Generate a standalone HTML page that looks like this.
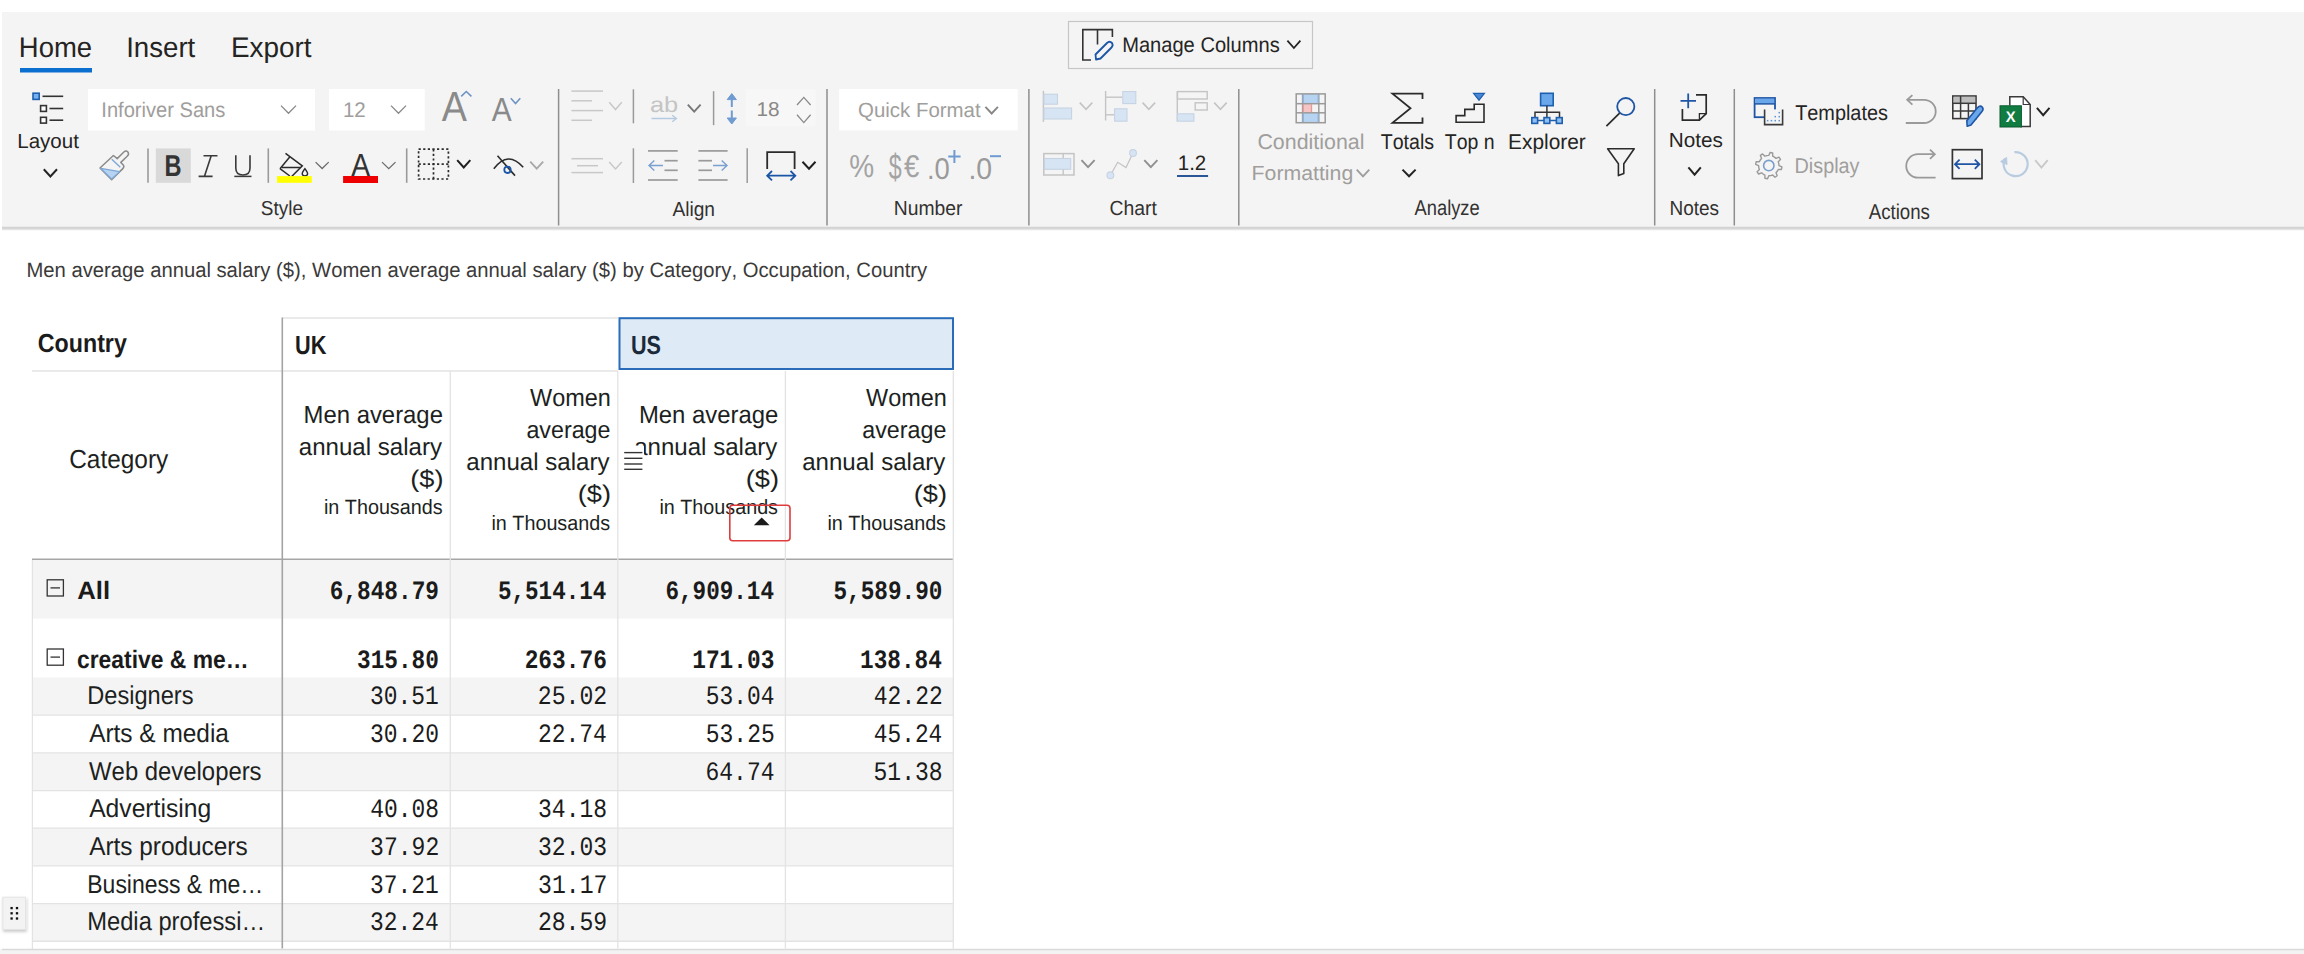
<!DOCTYPE html>
<html><head><meta charset="utf-8"><style>
html,body{margin:0;padding:0;background:#fff;width:2304px;height:954px;overflow:hidden;}
svg{display:block;}
text{font-kerning:none;}
</style></head><body>
<svg width="2304" height="954" viewBox="0 0 2304 954" text-rendering="geometricPrecision">
<rect x="0.00" y="0.00" width="2304.00" height="954.00" fill="#ffffff"/>
<rect x="2.00" y="12.00" width="2302.00" height="214.50" fill="#f4f4f4"/>
<defs><linearGradient id="sh" x1="0" y1="0" x2="0" y2="1"><stop offset="0" stop-color="#dedede"/><stop offset="0.28" stop-color="#cecece"/><stop offset="0.6" stop-color="#e4e4e4"/><stop offset="1" stop-color="#ffffff" stop-opacity="0"/></linearGradient><linearGradient id="sh2" x1="0" y1="0" x2="0" y2="1"><stop offset="0" stop-color="#d0d0d0"/><stop offset="1" stop-color="#ffffff" stop-opacity="0"/></linearGradient></defs>
<rect x="2.00" y="226.50" width="2302.00" height="5.00" fill="url(#sh)"/>
<text x="18.85" y="57.30" font-family="Liberation Sans" font-size="28.34" fill="#252423" textLength="73.27" lengthAdjust="spacingAndGlyphs">Home</text>
<text x="126.15" y="57.10" font-family="Liberation Sans" font-size="28.34" fill="#252423" textLength="69.15" lengthAdjust="spacingAndGlyphs">Insert</text>
<text x="231.01" y="57.10" font-family="Liberation Sans" font-size="28.34" fill="#252423" textLength="80.59" lengthAdjust="spacingAndGlyphs">Export</text>
<rect x="20.00" y="68.00" width="72.00" height="4.50" fill="#0a6fcf"/>
<rect x="1068.50" y="21.50" width="244.00" height="47.00" fill="none" stroke="#c6c6c6" stroke-width="1.20"/>
<path d="M1091,60 H1082.8 V29.6 H1112.4 V37" fill="none" stroke="#333" stroke-width="1.60" stroke-linejoin="miter" stroke-linecap="butt"/>
<path d="M1097.5,29.6 V44.5" fill="none" stroke="#333" stroke-width="1.60" stroke-linejoin="miter" stroke-linecap="butt"/>
<path d="M1096,59.5 L1095.5,54.5 L1107,43 Q1109.5,40.5 1112,43 Q1113.5,45.5 1111.5,47.5 L1100.5,58.5 Z" fill="none" stroke="#1b55a6" stroke-width="1.80" stroke-linejoin="round" stroke-linecap="butt"/>
<text x="1122.15" y="52.20" font-family="Liberation Sans" font-size="21.22" fill="#252423" textLength="157.58" lengthAdjust="spacingAndGlyphs">Manage Columns</text>
<path d="M1287.40,40.60 L1293.90,48.00 L1300.40,40.60" fill="none" stroke="#252423" stroke-width="1.80" stroke-linejoin="miter" stroke-linecap="butt"/>
<line x1="558.60" y1="89.00" x2="558.60" y2="225.50" stroke="#8e8e8e" stroke-width="1.50" stroke-linecap="butt"/>
<line x1="827.00" y1="89.00" x2="827.00" y2="225.50" stroke="#8e8e8e" stroke-width="1.50" stroke-linecap="butt"/>
<line x1="1028.90" y1="89.00" x2="1028.90" y2="225.50" stroke="#8e8e8e" stroke-width="1.50" stroke-linecap="butt"/>
<line x1="1238.80" y1="89.00" x2="1238.80" y2="225.50" stroke="#8e8e8e" stroke-width="1.50" stroke-linecap="butt"/>
<line x1="1654.70" y1="89.00" x2="1654.70" y2="225.50" stroke="#8e8e8e" stroke-width="1.50" stroke-linecap="butt"/>
<line x1="1734.30" y1="89.00" x2="1734.30" y2="225.50" stroke="#8e8e8e" stroke-width="1.50" stroke-linecap="butt"/>
<rect x="33.00" y="93.20" width="6.20" height="6.20" fill="#78b0ee" stroke="#1f5fb0" stroke-width="1.60"/>
<line x1="42.50" y1="96.30" x2="63.20" y2="96.30" stroke="#333" stroke-width="1.60" stroke-linecap="butt"/>
<rect x="40.60" y="105.60" width="5.80" height="5.80" fill="#fff" stroke="#333" stroke-width="1.60"/>
<line x1="49.50" y1="108.50" x2="63.20" y2="108.50" stroke="#333" stroke-width="1.60" stroke-linecap="butt"/>
<rect x="40.60" y="117.30" width="5.80" height="5.80" fill="#fff" stroke="#333" stroke-width="1.60"/>
<line x1="49.50" y1="120.20" x2="63.20" y2="120.20" stroke="#333" stroke-width="1.60" stroke-linecap="butt"/>
<text x="17.22" y="148.40" font-family="Liberation Sans" font-size="20.49" fill="#252423" textLength="61.63" lengthAdjust="spacingAndGlyphs">Layout</text>
<path d="M43.80,169.20 L50.40,176.40 L57.00,169.20" fill="none" stroke="#252423" stroke-width="2.00" stroke-linejoin="miter" stroke-linecap="butt"/>
<rect x="88.00" y="89.00" width="227.00" height="41.50" fill="#ffffff"/>
<text x="101.35" y="117.40" font-family="Liberation Sans" font-size="21.22" fill="#a09e9c" textLength="123.98" lengthAdjust="spacingAndGlyphs">Inforiver Sans</text>
<path d="M281.00,105.60 L288.50,113.20 L296.00,105.60" fill="none" stroke="#8a8886" stroke-width="1.30" stroke-linejoin="miter" stroke-linecap="butt"/>
<rect x="329.00" y="89.00" width="95.70" height="41.50" fill="#ffffff"/>
<text x="342.93" y="117.40" font-family="Liberation Sans" font-size="21.22" fill="#a09e9c" textLength="22.90" lengthAdjust="spacingAndGlyphs">12</text>
<path d="M391.00,105.60 L398.50,113.20 L406.00,105.60" fill="none" stroke="#8a8886" stroke-width="1.30" stroke-linejoin="miter" stroke-linecap="butt"/>
<text x="441.83" y="121.00" font-family="Liberation Sans" font-size="42.15" fill="#8a8a8a" textLength="25.15" lengthAdjust="spacingAndGlyphs">A</text>
<path d="M461.20,96.40 L466.30,91.50 L471.40,96.40" fill="none" stroke="#6f93c4" stroke-width="1.60" stroke-linejoin="miter" stroke-linecap="butt"/>
<text x="491.84" y="121.00" font-family="Liberation Sans" font-size="33.43" fill="#8a8a8a" textLength="19.92" lengthAdjust="spacingAndGlyphs">A</text>
<path d="M510.80,98.30 L515.55,103.60 L520.30,98.30" fill="none" stroke="#6f93c4" stroke-width="1.60" stroke-linejoin="miter" stroke-linecap="butt"/>
<path d="M100,168 L113.4,155.5 L117.2,158.6 L123.6,152.2 Q126.5,149.6 128.2,152.5 Q129.2,154.6 127.2,156.3 L120.8,162.4 L123.3,165 Q124.6,166.8 122.8,168.6 L111.6,179.6 Z" fill="none" stroke="#8a8a8a" stroke-width="1.50" stroke-linejoin="round" stroke-linecap="butt"/>
<path d="M100.8,168.4 L119.6,171.6 L111.6,179 Z" fill="#b7d3f2" stroke="#7ea7d8" stroke-width="1.20" stroke-linejoin="round" stroke-linecap="butt"/>
<line x1="111.80" y1="159.20" x2="120.30" y2="167.20" stroke="#7ea7d8" stroke-width="1.40" stroke-linecap="butt"/>
<line x1="148.00" y1="148.40" x2="148.00" y2="182.80" stroke="#9a9a9a" stroke-width="1.60" stroke-linecap="butt"/>
<rect x="155.80" y="148.40" width="35.00" height="34.40" fill="#d9d9d9"/>
<text x="164.62" y="176.00" font-family="Liberation Sans" font-size="30.23" fill="#333333" font-weight="bold" textLength="17.05" lengthAdjust="spacingAndGlyphs">B</text>
<path d="M203.5,155.8 H217.5 M198.6,176.4 H212.6 M211.2,155.8 L204.4,176.4" fill="none" stroke="#3a3a3a" stroke-width="1.60" stroke-linejoin="miter" stroke-linecap="butt"/>
<path d="M235.8,155.3 V168 Q235.8,175 243,175 Q250,175 250,168 V155.3" fill="none" stroke="#3a3a3a" stroke-width="1.60" stroke-linejoin="miter" stroke-linecap="butt"/>
<line x1="234.30" y1="176.40" x2="251.50" y2="176.40" stroke="#3a3a3a" stroke-width="1.50" stroke-linecap="butt"/>
<line x1="268.30" y1="148.40" x2="268.30" y2="182.80" stroke="#9a9a9a" stroke-width="1.60" stroke-linecap="butt"/>
<path d="M285.5,153.4 L302.3,165.9 L291.7,176.5 M280,168.7 L289.7,157 M280,168.7 L289.8,176" fill="none" stroke="#2b2b2b" stroke-width="1.50" stroke-linejoin="miter" stroke-linecap="butt"/>
<line x1="282.00" y1="167.50" x2="300.30" y2="167.50" stroke="#2b2b2b" stroke-width="1.50" stroke-linecap="butt"/>
<path d="M304.9,168.6 Q307.6,172.4 307.6,173.6 Q307.6,176 304.9,176 Q302.2,176 302.2,173.6 Q302.2,172.4 304.9,168.6 Z" fill="none" stroke="#2b2b2b" stroke-width="1.40" stroke-linejoin="miter" stroke-linecap="butt"/>
<rect x="277.00" y="176.10" width="34.80" height="6.70" fill="#ffff00"/>
<path d="M315.60,162.10 L322.15,168.50 L328.70,162.10" fill="none" stroke="#6b6b6b" stroke-width="1.30" stroke-linejoin="miter" stroke-linecap="butt"/>
<text x="351.19" y="176.00" font-family="Liberation Sans" font-size="31.83" fill="#333333" textLength="18.86" lengthAdjust="spacingAndGlyphs">A</text>
<rect x="343.10" y="176.00" width="34.90" height="7.00" fill="#ee0000"/>
<path d="M382.00,162.10 L388.75,168.60 L395.50,162.10" fill="none" stroke="#6b6b6b" stroke-width="1.30" stroke-linejoin="miter" stroke-linecap="butt"/>
<line x1="406.70" y1="148.40" x2="406.70" y2="182.80" stroke="#9a9a9a" stroke-width="1.60" stroke-linecap="butt"/>
<g stroke="#2b2b2b" stroke-width="1.7" fill="none" stroke-dasharray="2.2,2.4"><rect x="418.6" y="149.2" width="29.8" height="29.8"/><line x1="433.5" y1="149.2" x2="433.5" y2="179"/><line x1="418.6" y1="164.1" x2="448.4" y2="164.1"/></g>
<path d="M457.20,160.20 L463.75,167.40 L470.30,160.20" fill="none" stroke="#1f1f1f" stroke-width="2.00" stroke-linejoin="miter" stroke-linecap="butt"/>
<path d="M493.8,168.8 Q508,150 523.2,167.3" fill="none" stroke="#2b2b2b" stroke-width="1.60" stroke-linejoin="miter" stroke-linecap="butt"/>
<line x1="497.50" y1="155.80" x2="515.00" y2="175.60" stroke="#2b2b2b" stroke-width="1.60" stroke-linecap="butt"/>
<circle cx="507.5" cy="169.8" r="3.2" fill="none" stroke="#1b55a6" stroke-width="1.8"/>
<path d="M530.20,161.60 L536.70,168.60 L543.20,161.60" fill="none" stroke="#a8a8a8" stroke-width="1.80" stroke-linejoin="miter" stroke-linecap="butt"/>
<text x="260.84" y="214.90" font-family="Liberation Sans" font-size="20.20" fill="#323130" textLength="42.10" lengthAdjust="spacingAndGlyphs">Style</text>
<line x1="571.40" y1="91.10" x2="603.00" y2="91.10" stroke="#c8c8c8" stroke-width="1.50" stroke-linecap="butt"/>
<line x1="571.40" y1="100.80" x2="592.00" y2="100.80" stroke="#c8c8c8" stroke-width="1.50" stroke-linecap="butt"/>
<line x1="571.40" y1="110.60" x2="603.00" y2="110.60" stroke="#c8c8c8" stroke-width="1.50" stroke-linecap="butt"/>
<line x1="571.40" y1="120.30" x2="592.00" y2="120.30" stroke="#c8c8c8" stroke-width="1.50" stroke-linecap="butt"/>
<path d="M609.20,102.20 L615.50,109.60 L621.80,102.20" fill="none" stroke="#c8c8c8" stroke-width="1.50" stroke-linejoin="miter" stroke-linecap="butt"/>
<line x1="633.40" y1="89.30" x2="633.40" y2="123.30" stroke="#9a9a9a" stroke-width="1.50" stroke-linecap="butt"/>
<text x="649.92" y="111.80" font-family="Liberation Sans" font-size="21.58" fill="#c4c4c4" textLength="28.25" lengthAdjust="spacingAndGlyphs">ab</text>
<path d="M651.5,118.5 H676.5 M672.2,115.2 L676.5,118.5 L672.2,121.8" fill="none" stroke="#b5c9e0" stroke-width="1.30" stroke-linejoin="miter" stroke-linecap="butt"/>
<path d="M687.80,104.60 L694.20,111.60 L700.60,104.60" fill="none" stroke="#777777" stroke-width="1.90" stroke-linejoin="miter" stroke-linecap="butt"/>
<line x1="713.60" y1="91.20" x2="713.60" y2="125.20" stroke="#9a9a9a" stroke-width="1.50" stroke-linecap="butt"/>
<path d="M731.8,95 V107 M731.8,110.5 V122.5" fill="none" stroke="#6f9bd1" stroke-width="2.00" stroke-linejoin="miter" stroke-linecap="butt"/>
<path d="M727.2,99.6 L731.8,93.6 L736.4,99.6 Z M727.2,118 L731.8,124 L736.4,118 Z" fill="#6f9bd1" stroke="#6f9bd1" stroke-width="1.00" stroke-linejoin="miter" stroke-linecap="butt"/>
<rect x="745.80" y="89.30" width="70.00" height="37.00" fill="#f7f7f7"/>
<text x="756.42" y="116.00" font-family="Liberation Sans" font-size="20.06" fill="#8a8886" textLength="23.08" lengthAdjust="spacingAndGlyphs">18</text>
<path d="M797.00,105.00 L803.80,97.40 L810.60,105.00" fill="none" stroke="#8a8a8a" stroke-width="1.30" stroke-linejoin="miter" stroke-linecap="butt"/>
<path d="M797.00,114.80 L803.80,122.60 L810.60,114.80" fill="none" stroke="#8a8a8a" stroke-width="1.30" stroke-linejoin="miter" stroke-linecap="butt"/>
<line x1="571.40" y1="158.70" x2="603.00" y2="158.70" stroke="#c8c8c8" stroke-width="1.50" stroke-linecap="butt"/>
<line x1="577.00" y1="165.70" x2="598.00" y2="165.70" stroke="#c8c8c8" stroke-width="1.50" stroke-linecap="butt"/>
<line x1="571.40" y1="172.60" x2="603.00" y2="172.60" stroke="#c8c8c8" stroke-width="1.50" stroke-linecap="butt"/>
<path d="M609.20,162.00 L615.50,169.00 L621.80,162.00" fill="none" stroke="#c8c8c8" stroke-width="1.50" stroke-linejoin="miter" stroke-linecap="butt"/>
<line x1="633.40" y1="148.30" x2="633.40" y2="183.00" stroke="#9a9a9a" stroke-width="1.50" stroke-linecap="butt"/>
<line x1="648.00" y1="150.90" x2="677.70" y2="150.90" stroke="#9a9a9a" stroke-width="1.70" stroke-linecap="butt"/>
<line x1="664.50" y1="160.70" x2="677.70" y2="160.70" stroke="#9a9a9a" stroke-width="1.70" stroke-linecap="butt"/>
<line x1="664.50" y1="170.30" x2="677.70" y2="170.30" stroke="#9a9a9a" stroke-width="1.70" stroke-linecap="butt"/>
<line x1="648.00" y1="180.00" x2="677.70" y2="180.00" stroke="#9a9a9a" stroke-width="1.70" stroke-linecap="butt"/>
<path d="M663,165.5 H649 M654.3,160.5 L649,165.5 L654.3,170.5" fill="none" stroke="#7aa0d0" stroke-width="1.40" stroke-linejoin="miter" stroke-linecap="butt"/>
<line x1="698.40" y1="150.90" x2="727.60" y2="150.90" stroke="#9a9a9a" stroke-width="1.70" stroke-linecap="butt"/>
<line x1="698.40" y1="160.70" x2="712.00" y2="160.70" stroke="#9a9a9a" stroke-width="1.70" stroke-linecap="butt"/>
<line x1="698.40" y1="170.30" x2="712.00" y2="170.30" stroke="#9a9a9a" stroke-width="1.70" stroke-linecap="butt"/>
<line x1="698.40" y1="180.00" x2="727.60" y2="180.00" stroke="#9a9a9a" stroke-width="1.70" stroke-linecap="butt"/>
<path d="M713,165.5 H727 M721.7,160.5 L727,165.5 L721.7,170.5" fill="none" stroke="#7aa0d0" stroke-width="1.40" stroke-linejoin="miter" stroke-linecap="butt"/>
<line x1="747.20" y1="148.30" x2="747.20" y2="183.00" stroke="#9a9a9a" stroke-width="1.50" stroke-linecap="butt"/>
<path d="M767.2,169 V152.2 H794.6 V169" fill="none" stroke="#2b2b2b" stroke-width="1.80" stroke-linejoin="miter" stroke-linecap="butt"/>
<path d="M767.5,175.7 H795 M772,171 L767.2,175.7 L772,180.4 M790.5,171 L795.3,175.7 L790.5,180.4" fill="none" stroke="#1b55a6" stroke-width="1.80" stroke-linejoin="miter" stroke-linecap="butt"/>
<path d="M802.50,161.80 L809.00,168.80 L815.50,161.80" fill="none" stroke="#1f1f1f" stroke-width="2.00" stroke-linejoin="miter" stroke-linecap="butt"/>
<text x="672.46" y="215.50" font-family="Liberation Sans" font-size="20.35" fill="#323130" textLength="42.58" lengthAdjust="spacingAndGlyphs">Align</text>
<rect x="839.10" y="89.00" width="178.60" height="41.40" fill="#ffffff"/>
<text x="858.03" y="117.20" font-family="Liberation Sans" font-size="20.49" fill="#a09e9c" textLength="122.62" lengthAdjust="spacingAndGlyphs">Quick Format</text>
<path d="M985.40,106.80 L991.65,113.50 L997.90,106.80" fill="none" stroke="#8a8886" stroke-width="1.90" stroke-linejoin="miter" stroke-linecap="butt"/>
<text x="849.20" y="176.50" font-family="Liberation Sans" font-size="31.86" fill="#a3a3a3" textLength="24.90" lengthAdjust="spacingAndGlyphs">%</text>
<text x="888.75" y="179.00" font-family="Liberation Sans" font-size="35.71" fill="#a3a3a3" textLength="12.92" lengthAdjust="spacingAndGlyphs">$</text>
<text x="903.99" y="176.50" font-family="Liberation Sans" font-size="31.43" fill="#a3a3a3" textLength="15.30" lengthAdjust="spacingAndGlyphs">€</text>
<text x="927.00" y="178.50" font-family="Liberation Sans" font-size="30.00" fill="#9a9a9a" textLength="22.88" lengthAdjust="spacingAndGlyphs">.0</text>
<path d="M948.2,156.5 H960.6 M954.4,150 V163" fill="none" stroke="#6f9bd1" stroke-width="2.00" stroke-linejoin="miter" stroke-linecap="butt"/>
<text x="968.40" y="178.50" font-family="Liberation Sans" font-size="30.00" fill="#9a9a9a" textLength="23.71" lengthAdjust="spacingAndGlyphs">.0</text>
<line x1="990.00" y1="156.20" x2="1001.00" y2="156.20" stroke="#6f9bd1" stroke-width="2.00" stroke-linecap="butt"/>
<text x="893.82" y="215.00" font-family="Liberation Sans" font-size="20.35" fill="#323130" textLength="68.71" lengthAdjust="spacingAndGlyphs">Number</text>
<line x1="1043.40" y1="90.80" x2="1043.40" y2="121.90" stroke="#c4c4c4" stroke-width="1.40" stroke-linecap="butt"/>
<rect x="1044.00" y="94.20" width="13.50" height="10.00" fill="#d6e4f4" stroke="#c7d3e2" stroke-width="1.10"/>
<rect x="1044.00" y="108.00" width="27.60" height="11.00" fill="#d6e4f4" stroke="#c7d3e2" stroke-width="1.10"/>
<path d="M1079.80,102.60 L1086.05,109.40 L1092.30,102.60" fill="none" stroke="#c4c4c4" stroke-width="1.60" stroke-linejoin="miter" stroke-linecap="butt"/>
<line x1="1105.60" y1="91.00" x2="1105.60" y2="120.50" stroke="#c4c4c4" stroke-width="1.40" stroke-linecap="butt"/>
<line x1="1105.60" y1="97.20" x2="1122.50" y2="97.20" stroke="#c4c4c4" stroke-width="1.40" stroke-linecap="butt"/>
<line x1="1105.60" y1="114.80" x2="1114.20" y2="114.80" stroke="#c4c4c4" stroke-width="1.40" stroke-linecap="butt"/>
<rect x="1122.80" y="91.60" width="13.00" height="12.00" fill="#d6e4f4" stroke="#c7d3e2" stroke-width="1.10"/>
<rect x="1114.60" y="108.80" width="12.40" height="12.40" fill="#d6e4f4" stroke="#c7d3e2" stroke-width="1.10"/>
<path d="M1142.60,102.60 L1148.85,109.40 L1155.10,102.60" fill="none" stroke="#c4c4c4" stroke-width="1.60" stroke-linejoin="miter" stroke-linecap="butt"/>
<line x1="1177.30" y1="91.20" x2="1177.30" y2="121.50" stroke="#c4c4c4" stroke-width="1.40" stroke-linecap="butt"/>
<rect x="1177.50" y="91.60" width="29.70" height="7.40" fill="none" stroke="#c4c4c4" stroke-width="1.40"/>
<rect x="1195.20" y="102.80" width="12.00" height="7.20" fill="none" stroke="#c4c4c4" stroke-width="1.40"/>
<rect x="1177.50" y="113.80" width="16.40" height="7.40" fill="#d6e4f4" stroke="#c7d3e2" stroke-width="1.10"/>
<path d="M1214.20,102.60 L1220.45,109.40 L1226.70,102.60" fill="none" stroke="#c4c4c4" stroke-width="1.60" stroke-linejoin="miter" stroke-linecap="butt"/>
<rect x="1043.80" y="153.60" width="30.20" height="21.40" fill="none" stroke="#c4c4c4" stroke-width="1.50"/>
<line x1="1063.20" y1="153.60" x2="1063.20" y2="175.00" stroke="#c4c4c4" stroke-width="1.40" stroke-linecap="butt"/>
<rect x="1044.50" y="158.50" width="26.20" height="10.80" fill="#d6e4f4" stroke="#c7d3e2" stroke-width="1.10"/>
<path d="M1081.50,160.20 L1088.05,167.20 L1094.60,160.20" fill="none" stroke="#8f8f8f" stroke-width="1.90" stroke-linejoin="miter" stroke-linecap="butt"/>
<path d="M1110.4,175.3 L1117.7,162.3 L1126,167.6 L1133,153" fill="none" stroke="#c4c4c4" stroke-width="1.30" stroke-linejoin="miter" stroke-linecap="butt"/>
<circle cx="1110.4" cy="175.3" r="3.4" fill="#d6e4f4" stroke="#c7d3e2" stroke-width="1.1"/>
<circle cx="1133" cy="153" r="3.4" fill="#d6e4f4" stroke="#c7d3e2" stroke-width="1.1"/>
<path d="M1144.30,160.20 L1150.85,167.20 L1157.40,160.20" fill="none" stroke="#8f8f8f" stroke-width="1.90" stroke-linejoin="miter" stroke-linecap="butt"/>
<text x="1177.74" y="170.00" font-family="Liberation Sans" font-size="20.92" fill="#252423" textLength="28.49" lengthAdjust="spacingAndGlyphs">1.2</text>
<rect x="1177.00" y="175.00" width="31.10" height="2.00" fill="#2b5797"/>
<text x="1109.52" y="214.90" font-family="Liberation Sans" font-size="20.35" fill="#323130" textLength="47.43" lengthAdjust="spacingAndGlyphs">Chart</text>
<rect x="1302.60" y="93.60" width="16.20" height="10.10" fill="#b6d3f2"/>
<rect x="1302.60" y="112.80" width="16.20" height="10.10" fill="#b6d3f2"/>
<rect x="1302.60" y="103.70" width="9.40" height="9.10" fill="#f5c4c4"/>
<g stroke="#9a9a9a" stroke-width="1.5" fill="none"><rect x="1296.2" y="93.9" width="29" height="28.8"/><line x1="1302.6" y1="93.9" x2="1302.6" y2="122.7"/><line x1="1318.8" y1="93.9" x2="1318.8" y2="122.7"/><line x1="1296.2" y1="103.7" x2="1325.2" y2="103.7"/><line x1="1296.2" y1="112.8" x2="1325.2" y2="112.8"/></g>
<g stroke="#8fb4de" stroke-width="1.3" fill="none"><line x1="1303.2" y1="94.5" x2="1303.2" y2="103"/><line x1="1318.2" y1="94.5" x2="1318.2" y2="103"/><line x1="1303.2" y1="113.4" x2="1303.2" y2="122"/><line x1="1318.2" y1="113.4" x2="1318.2" y2="122"/></g>
<line x1="1303.20" y1="104.20" x2="1303.20" y2="112.30" stroke="#e59a9a" stroke-width="1.30" stroke-linecap="butt"/>
<line x1="1311.50" y1="104.20" x2="1311.50" y2="112.30" stroke="#e59a9a" stroke-width="1.30" stroke-linecap="butt"/>
<text x="1257.41" y="148.90" font-family="Liberation Sans" font-size="21.37" fill="#a09e9c" textLength="107.02" lengthAdjust="spacingAndGlyphs">Conditional</text>
<text x="1251.55" y="179.70" font-family="Liberation Sans" font-size="20.35" fill="#a09e9c" textLength="101.72" lengthAdjust="spacingAndGlyphs">Formatting</text>
<path d="M1356.70,169.60 L1363.00,176.30 L1369.30,169.60" fill="none" stroke="#a09e9c" stroke-width="1.90" stroke-linejoin="miter" stroke-linecap="butt"/>
<path d="M1422.5,99 V93.6 H1392.5 L1410.5,108.2 L1392.5,122.9 H1422.5 V117.5" fill="none" stroke="#2b2b2b" stroke-width="1.80" stroke-linejoin="miter" stroke-linecap="butt"/>
<text x="1380.76" y="148.90" font-family="Liberation Sans" font-size="21.37" fill="#252423" textLength="53.35" lengthAdjust="spacingAndGlyphs">Totals</text>
<path d="M1402.50,169.60 L1409.05,176.30 L1415.60,169.60" fill="none" stroke="#252423" stroke-width="2.00" stroke-linejoin="miter" stroke-linecap="butt"/>
<path d="M1456.1,122.2 V115.6 H1464.8 V109.4 H1474.2 V104.2 H1484.0 V122.2 Z" fill="none" stroke="#2b2b2b" stroke-width="1.60" stroke-linejoin="miter" stroke-linecap="butt"/>
<path d="M1473.6,93.4 H1484.4 L1479,100.2 Z" fill="#4a88d6" stroke="#1f5fb0" stroke-width="1.20" stroke-linejoin="miter" stroke-linecap="butt"/>
<text x="1444.86" y="148.90" font-family="Liberation Sans" font-size="21.37" fill="#252423" textLength="49.80" lengthAdjust="spacingAndGlyphs">Top n</text>
<rect x="1540.60" y="93.30" width="12.60" height="12.40" fill="#6aa6ea" stroke="#1f5fb0" stroke-width="1.60"/>
<path d="M1546.9,105.7 V117.5 M1535,117.5 V112.2 H1559.5 V117.5" fill="none" stroke="#333" stroke-width="1.50" stroke-linejoin="miter" stroke-linecap="butt"/>
<rect x="1531.80" y="117.60" width="5.80" height="5.80" fill="#8fc0f3" stroke="#1f5fb0" stroke-width="1.60"/>
<rect x="1544.00" y="117.60" width="5.80" height="5.80" fill="#8fc0f3" stroke="#1f5fb0" stroke-width="1.60"/>
<rect x="1556.40" y="117.60" width="5.80" height="5.80" fill="#8fc0f3" stroke="#1f5fb0" stroke-width="1.60"/>
<line x1="1537.60" y1="120.50" x2="1544.00" y2="120.50" stroke="#1f5fb0" stroke-width="1.50" stroke-linecap="butt"/>
<line x1="1549.80" y1="120.50" x2="1556.40" y2="120.50" stroke="#1f5fb0" stroke-width="1.50" stroke-linecap="butt"/>
<text x="1508.09" y="148.90" font-family="Liberation Sans" font-size="21.37" fill="#252423" textLength="77.76" lengthAdjust="spacingAndGlyphs">Explorer</text>
<circle cx="1625.8" cy="106.6" r="8.6" fill="none" stroke="#1f55a5" stroke-width="1.8"/>
<line x1="1606.40" y1="126.20" x2="1619.60" y2="113.20" stroke="#2b2b2b" stroke-width="1.70" stroke-linecap="butt"/>
<path d="M1607.6,148.8 H1634.2 L1623.8,163.8 V173.5 L1618.4,175.6 V163.8 Z" fill="none" stroke="#2b2b2b" stroke-width="1.60" stroke-linejoin="round" stroke-linecap="butt"/>
<text x="1414.56" y="214.90" font-family="Liberation Sans" font-size="21.37" fill="#323130" textLength="65.15" lengthAdjust="spacingAndGlyphs">Analyze</text>
<path d="M1688.2,93.5 V108.2 M1680.5,100.8 H1696" fill="none" stroke="#1f55a5" stroke-width="1.80" stroke-linejoin="miter" stroke-linecap="butt"/>
<path d="M1696,94.9 H1706.2 V113.6 L1699.4,120.2 H1682.4 V109" fill="none" stroke="#2b2b2b" stroke-width="1.70" stroke-linejoin="miter" stroke-linecap="butt"/>
<path d="M1699.4,120.2 V113.6 H1706.2" fill="none" stroke="#2b2b2b" stroke-width="1.30" stroke-linejoin="miter" stroke-linecap="butt"/>
<text x="1668.80" y="146.60" font-family="Liberation Sans" font-size="20.49" fill="#252423" textLength="54.15" lengthAdjust="spacingAndGlyphs">Notes</text>
<path d="M1688.40,167.30 L1694.60,174.60 L1700.80,167.30" fill="none" stroke="#252423" stroke-width="2.00" stroke-linejoin="miter" stroke-linecap="butt"/>
<text x="1669.44" y="215.00" font-family="Liberation Sans" font-size="20.35" fill="#323130" textLength="49.65" lengthAdjust="spacingAndGlyphs">Notes</text>
<rect x="1754.60" y="98.00" width="20.40" height="19.20" fill="none" stroke="#1f55a5" stroke-width="1.80"/>
<rect x="1755.40" y="98.60" width="18.80" height="5.30" fill="#6aa6ea"/>
<line x1="1754.60" y1="103.90" x2="1775.00" y2="103.90" stroke="#1f55a5" stroke-width="1.50" stroke-linecap="butt"/>
<rect x="1764.60" y="109.40" width="18.00" height="15.20" fill="#f4f4f4"/>
<path d="M1764.6,109.4 V124.6 H1782.6 V109.4" fill="none" stroke="#3a3a3a" stroke-width="1.60" stroke-linejoin="miter" stroke-linecap="butt"/>
<rect x="1778.50" y="111.90" width="1.50" height="1.50" fill="#5b93d3"/>
<rect x="1774.50" y="115.90" width="1.50" height="1.50" fill="#5b93d3"/>
<rect x="1778.50" y="115.90" width="1.50" height="1.50" fill="#5b93d3"/>
<rect x="1766.90" y="119.90" width="1.50" height="1.50" fill="#5b93d3"/>
<rect x="1770.70" y="119.90" width="1.50" height="1.50" fill="#5b93d3"/>
<rect x="1774.50" y="119.90" width="1.50" height="1.50" fill="#5b93d3"/>
<rect x="1778.50" y="119.90" width="1.50" height="1.50" fill="#5b93d3"/>
<text x="1795.15" y="119.60" font-family="Liberation Sans" font-size="21.37" fill="#252423" textLength="92.76" lengthAdjust="spacingAndGlyphs">Templates</text>
<path d="M1779.00,165.60 L1781.94,166.84 L1781.42,169.48 L1778.22,169.50 L1777.28,171.27 L1776.01,172.81 L1777.21,175.77 L1774.98,177.27 L1772.70,175.02 L1770.79,175.60 L1768.80,175.80 L1767.56,178.74 L1764.92,178.22 L1764.90,175.02 L1763.13,174.08 L1761.59,172.81 L1758.63,174.01 L1757.13,171.78 L1759.38,169.50 L1758.80,167.59 L1758.60,165.60 L1755.66,164.36 L1756.18,161.72 L1759.38,161.70 L1760.32,159.93 L1761.59,158.39 L1760.39,155.43 L1762.62,153.93 L1764.90,156.18 L1766.81,155.60 L1768.80,155.40 L1770.04,152.46 L1772.68,152.98 L1772.70,156.18 L1774.47,157.12 L1776.01,158.39 L1778.97,157.19 L1780.47,159.42 L1778.22,161.70 L1778.80,163.61 Z" fill="none" stroke="#9a9a9a" stroke-width="1.40" stroke-linejoin="round" stroke-linecap="butt"/>
<circle cx="1768.8" cy="165.6" r="5.2" fill="none" stroke="#7a9fcc" stroke-width="1.6"/>
<text x="1794.47" y="173.00" font-family="Liberation Sans" font-size="21.37" fill="#a09e9c" textLength="65.07" lengthAdjust="spacingAndGlyphs">Display</text>
<path d="M1907.2,99.8 H1924.1 A11.6,11.6 0 0 1 1924.1,123 H1905.8" fill="none" stroke="#9a9a9a" stroke-width="1.80" stroke-linejoin="miter" stroke-linecap="butt"/>
<path d="M1912.4,95.2 L1907.2,99.8 L1912.4,104.6" fill="none" stroke="#9a9a9a" stroke-width="1.80" stroke-linejoin="miter" stroke-linecap="butt"/>
<rect x="1952.80" y="96.00" width="23.20" height="22.60" fill="none" stroke="#3a3a3a" stroke-width="1.60"/>
<rect x="1953.60" y="96.80" width="21.60" height="6.40" fill="#bdbdbd"/>
<g stroke="#3a3a3a" stroke-width="1.5"><line x1="1960.6" y1="96" x2="1960.6" y2="118.6"/><line x1="1968.4" y1="103.3" x2="1968.4" y2="118.6"/><line x1="1952.8" y1="103.3" x2="1976" y2="103.3"/><line x1="1952.8" y1="111" x2="1976" y2="111"/></g>
<path d="M1967.2,126.2 L1966.8,120.8 L1977.6,107.6 Q1980.2,105 1982.4,107.2 Q1984,109.6 1981.6,112 L1971,125 Z" fill="#6aa6ea" stroke="#1f55a5" stroke-width="1.60" stroke-linejoin="round" stroke-linecap="butt"/>
<path d="M2009.8,105.5 V96.8 H2023.2 L2030.2,104.5 V126.4 H2020" fill="#ffffff" stroke="#3a3a3a" stroke-width="1.50" stroke-linejoin="miter" stroke-linecap="butt"/>
<path d="M2023.2,96.8 V104.5 H2030.2" fill="none" stroke="#3a3a3a" stroke-width="1.20" stroke-linejoin="miter" stroke-linecap="butt"/>
<rect x="2000.00" y="105.80" width="21.40" height="21.20" fill="#107c41" stroke="#0b5a2f" stroke-width="1.00"/>
<text x="2005.67" y="122.00" font-family="Liberation Sans" font-size="15.12" fill="#ffffff" font-weight="bold" textLength="9.86" lengthAdjust="spacingAndGlyphs">X</text>
<path d="M2036.90,107.90 L2043.20,115.20 L2049.50,107.90" fill="none" stroke="#252423" stroke-width="2.00" stroke-linejoin="miter" stroke-linecap="butt"/>
<path d="M1934.8,154.2 H1918 A11.75,11.75 0 0 0 1918,177.7 H1935.6" fill="none" stroke="#9a9a9a" stroke-width="1.80" stroke-linejoin="miter" stroke-linecap="butt"/>
<path d="M1930,149.6 L1934.8,154.2 L1930,158.8" fill="none" stroke="#9a9a9a" stroke-width="1.80" stroke-linejoin="miter" stroke-linecap="butt"/>
<rect x="1952.40" y="149.70" width="29.60" height="28.90" fill="none" stroke="#333" stroke-width="1.70"/>
<path d="M1955.3,164.2 H1979.2 M1959.6,159.6 L1955,164.2 L1959.6,168.8 M1974.8,159.6 L1979.4,164.2 L1974.8,168.8" fill="none" stroke="#1f55a5" stroke-width="1.80" stroke-linejoin="miter" stroke-linecap="butt"/>
<path d="M2005,158.6 A12,12 0 1 0 2014.4,152.2" fill="none" stroke="#b9cbe0" stroke-width="2.20" stroke-linejoin="miter" stroke-linecap="butt"/>
<path d="M2000.6,161.6 L2006.6,157.4 L2007,164.6 Z" fill="#b9cbe0" stroke="#b9cbe0" stroke-width="1.00" stroke-linejoin="miter" stroke-linecap="butt"/>
<path d="M2035.20,160.20 L2041.45,167.50 L2047.70,160.20" fill="none" stroke="#c8c8c8" stroke-width="1.80" stroke-linejoin="miter" stroke-linecap="butt"/>
<text x="1868.71" y="218.60" font-family="Liberation Sans" font-size="21.37" fill="#323130" textLength="61.26" lengthAdjust="spacingAndGlyphs">Actions</text>
<text x="26.44" y="276.70" font-family="Liberation Sans" font-size="20.78" fill="#3b3a39" textLength="900.70" lengthAdjust="spacingAndGlyphs">Men average annual salary ($), Women average annual salary ($) by Category, Occupation, Country</text>
<rect x="32.50" y="560.00" width="921.00" height="58.60" fill="#f4f4f4"/>
<rect x="32.50" y="677.50" width="921.00" height="37.68" fill="#f4f4f4"/>
<rect x="32.50" y="752.86" width="921.00" height="37.68" fill="#f4f4f4"/>
<rect x="32.50" y="828.22" width="921.00" height="37.68" fill="#f4f4f4"/>
<rect x="32.50" y="903.58" width="921.00" height="37.68" fill="#f4f4f4"/>
<line x1="32.50" y1="715.18" x2="953.50" y2="715.18" stroke="#e3e3e3" stroke-width="1.30" stroke-linecap="butt"/>
<line x1="32.50" y1="752.86" x2="953.50" y2="752.86" stroke="#e3e3e3" stroke-width="1.30" stroke-linecap="butt"/>
<line x1="32.50" y1="790.54" x2="953.50" y2="790.54" stroke="#e3e3e3" stroke-width="1.30" stroke-linecap="butt"/>
<line x1="32.50" y1="828.22" x2="953.50" y2="828.22" stroke="#e3e3e3" stroke-width="1.30" stroke-linecap="butt"/>
<line x1="32.50" y1="865.90" x2="953.50" y2="865.90" stroke="#e3e3e3" stroke-width="1.30" stroke-linecap="butt"/>
<line x1="32.50" y1="903.58" x2="953.50" y2="903.58" stroke="#e3e3e3" stroke-width="1.30" stroke-linecap="butt"/>
<line x1="32.50" y1="941.26" x2="953.50" y2="941.26" stroke="#e3e3e3" stroke-width="1.30" stroke-linecap="butt"/>
<line x1="282.50" y1="318.00" x2="618.00" y2="318.00" stroke="#e3e3e3" stroke-width="1.30" stroke-linecap="butt"/>
<line x1="32.00" y1="371.00" x2="618.00" y2="371.00" stroke="#e3e3e3" stroke-width="1.30" stroke-linecap="butt"/>
<line x1="32.00" y1="559.30" x2="953.50" y2="559.30" stroke="#a6a6a6" stroke-width="1.60" stroke-linecap="butt"/>
<line x1="282.30" y1="317.50" x2="282.30" y2="948.50" stroke="#a3a3a3" stroke-width="1.60" stroke-linecap="butt"/>
<line x1="450.30" y1="371.00" x2="450.30" y2="948.50" stroke="#e3e3e3" stroke-width="1.30" stroke-linecap="butt"/>
<line x1="617.80" y1="371.00" x2="617.80" y2="948.50" stroke="#e3e3e3" stroke-width="1.30" stroke-linecap="butt"/>
<line x1="785.40" y1="371.00" x2="785.40" y2="948.50" stroke="#e3e3e3" stroke-width="1.30" stroke-linecap="butt"/>
<line x1="953.30" y1="371.00" x2="953.30" y2="948.50" stroke="#e3e3e3" stroke-width="1.30" stroke-linecap="butt"/>
<line x1="32.40" y1="560.00" x2="32.40" y2="949.00" stroke="#e3e3e3" stroke-width="1.20" stroke-linecap="butt"/>
<rect x="619.50" y="318.20" width="333.50" height="50.80" fill="#deebf7" stroke="#2a6cb8" stroke-width="2.00"/>
<text x="37.80" y="352.20" font-family="Liberation Sans" font-size="26.16" fill="#1b1b1b" font-weight="bold" textLength="89.03" lengthAdjust="spacingAndGlyphs">Country</text>
<text x="295.10" y="353.60" font-family="Liberation Sans" font-size="26.16" fill="#1b1b1b" font-weight="bold" textLength="31.36" lengthAdjust="spacingAndGlyphs">UK</text>
<text x="631.00" y="353.70" font-family="Liberation Sans" font-size="26.16" fill="#1b2a3a" font-weight="bold" textLength="30.04" lengthAdjust="spacingAndGlyphs">US</text>
<text x="69.26" y="467.50" font-family="Liberation Sans" font-size="26.16" fill="#201f1e" textLength="98.99" lengthAdjust="spacingAndGlyphs">Category</text>
<text x="303.54" y="422.50" font-family="Liberation Sans" font-size="24.71" fill="#201f1e" textLength="139.42" lengthAdjust="spacingAndGlyphs">Men average</text>
<text x="298.78" y="454.50" font-family="Liberation Sans" font-size="24.29" fill="#201f1e" textLength="143.17" lengthAdjust="spacingAndGlyphs">annual salary</text>
<text x="410.31" y="486.50" font-family="Liberation Sans" font-size="24.29" fill="#201f1e" textLength="33.28" lengthAdjust="spacingAndGlyphs">($)</text>
<text x="323.98" y="514.00" font-family="Liberation Sans" font-size="20.64" fill="#201f1e" textLength="118.64" lengthAdjust="spacingAndGlyphs">in Thousands</text>
<text x="530.10" y="406.10" font-family="Liberation Sans" font-size="24.71" fill="#201f1e" textLength="80.83" lengthAdjust="spacingAndGlyphs">Women</text>
<text x="526.41" y="438.20" font-family="Liberation Sans" font-size="24.29" fill="#201f1e" textLength="84.02" lengthAdjust="spacingAndGlyphs">average</text>
<text x="466.28" y="470.30" font-family="Liberation Sans" font-size="24.29" fill="#201f1e" textLength="143.17" lengthAdjust="spacingAndGlyphs">annual salary</text>
<text x="577.81" y="502.30" font-family="Liberation Sans" font-size="24.29" fill="#201f1e" textLength="33.28" lengthAdjust="spacingAndGlyphs">($)</text>
<text x="491.48" y="530.10" font-family="Liberation Sans" font-size="20.64" fill="#201f1e" textLength="118.64" lengthAdjust="spacingAndGlyphs">in Thousands</text>
<text x="638.94" y="422.50" font-family="Liberation Sans" font-size="24.71" fill="#201f1e" textLength="139.42" lengthAdjust="spacingAndGlyphs">Men average</text>
<text x="634.18" y="454.50" font-family="Liberation Sans" font-size="24.29" fill="#201f1e" textLength="143.17" lengthAdjust="spacingAndGlyphs">annual salary</text>
<text x="745.71" y="486.50" font-family="Liberation Sans" font-size="24.29" fill="#201f1e" textLength="33.28" lengthAdjust="spacingAndGlyphs">($)</text>
<text x="659.38" y="514.00" font-family="Liberation Sans" font-size="20.64" fill="#201f1e" textLength="118.64" lengthAdjust="spacingAndGlyphs">in Thousands</text>
<text x="866.00" y="406.10" font-family="Liberation Sans" font-size="24.71" fill="#201f1e" textLength="80.83" lengthAdjust="spacingAndGlyphs">Women</text>
<text x="862.31" y="438.20" font-family="Liberation Sans" font-size="24.29" fill="#201f1e" textLength="84.02" lengthAdjust="spacingAndGlyphs">average</text>
<text x="802.18" y="470.30" font-family="Liberation Sans" font-size="24.29" fill="#201f1e" textLength="143.17" lengthAdjust="spacingAndGlyphs">annual salary</text>
<text x="913.71" y="502.30" font-family="Liberation Sans" font-size="24.29" fill="#201f1e" textLength="33.28" lengthAdjust="spacingAndGlyphs">($)</text>
<text x="827.38" y="530.10" font-family="Liberation Sans" font-size="20.64" fill="#201f1e" textLength="118.64" lengthAdjust="spacingAndGlyphs">in Thousands</text>
<rect x="622.50" y="446.00" width="21.50" height="28.00" fill="#ffffff"/>
<line x1="624.20" y1="452.60" x2="642.40" y2="452.60" stroke="#333333" stroke-width="1.40" stroke-linecap="butt"/>
<line x1="624.20" y1="458.30" x2="642.40" y2="458.30" stroke="#333333" stroke-width="1.40" stroke-linecap="butt"/>
<line x1="624.20" y1="464.00" x2="642.40" y2="464.00" stroke="#333333" stroke-width="1.40" stroke-linecap="butt"/>
<line x1="624.20" y1="469.30" x2="642.40" y2="469.30" stroke="#333333" stroke-width="1.40" stroke-linecap="butt"/>
<rect x="729.80" y="505.20" width="60.20" height="35.60" fill="none" stroke="#e03c3c" stroke-width="1.60" rx="3.00"/>
<path d="M753.8,525.3 L761.7,517.4 L769.6,525.3 Z" fill="#1b1b1b" stroke="none" stroke-width="1.50" stroke-linejoin="miter" stroke-linecap="butt"/>
<rect x="47.20" y="579.80" width="16.20" height="16.20" fill="none" stroke="#333333" stroke-width="1.30"/>
<line x1="50.50" y1="587.90" x2="60.00" y2="587.90" stroke="#333333" stroke-width="1.30" stroke-linecap="butt"/>
<rect x="47.20" y="649.00" width="16.20" height="16.20" fill="none" stroke="#333333" stroke-width="1.30"/>
<line x1="50.50" y1="657.10" x2="60.00" y2="657.10" stroke="#333333" stroke-width="1.30" stroke-linecap="butt"/>
<text x="77.26" y="598.50" font-family="Liberation Sans" font-size="25.15" fill="#1b1b1b" font-weight="bold" textLength="32.97" lengthAdjust="spacingAndGlyphs">All</text>
<text x="77.01" y="667.60" font-family="Liberation Sans" font-size="25.15" fill="#1b1b1b" font-weight="bold" textLength="171.58" lengthAdjust="spacingAndGlyphs">creative &amp; me…</text>
<text x="87.27" y="704.20" font-family="Liberation Sans" font-size="25.87" fill="#201f1e" textLength="106.19" lengthAdjust="spacingAndGlyphs">Designers</text>
<text x="89.15" y="741.88" font-family="Liberation Sans" font-size="25.87" fill="#201f1e" textLength="139.75" lengthAdjust="spacingAndGlyphs">Arts &amp; media</text>
<text x="89.10" y="779.56" font-family="Liberation Sans" font-size="25.87" fill="#201f1e" textLength="172.47" lengthAdjust="spacingAndGlyphs">Web developers</text>
<text x="89.15" y="817.24" font-family="Liberation Sans" font-size="25.87" fill="#201f1e" textLength="122.04" lengthAdjust="spacingAndGlyphs">Advertising</text>
<text x="89.15" y="854.92" font-family="Liberation Sans" font-size="25.87" fill="#201f1e" textLength="158.43" lengthAdjust="spacingAndGlyphs">Arts producers</text>
<text x="87.32" y="892.60" font-family="Liberation Sans" font-size="25.87" fill="#201f1e" textLength="176.00" lengthAdjust="spacingAndGlyphs">Business &amp; me…</text>
<text x="87.26" y="930.28" font-family="Liberation Sans" font-size="25.87" fill="#201f1e" textLength="177.86" lengthAdjust="spacingAndGlyphs">Media professi…</text>
<text x="329.76" y="599.10" font-family="Liberation Mono" font-size="26.61" fill="#1b1b1b" font-weight="bold" textLength="109.20" lengthAdjust="spacingAndGlyphs">6,848.79</text>
<text x="357.02" y="667.60" font-family="Liberation Mono" font-size="26.61" fill="#1b1b1b" font-weight="bold" textLength="81.89" lengthAdjust="spacingAndGlyphs">315.80</text>
<text x="498.00" y="599.10" font-family="Liberation Mono" font-size="26.61" fill="#1b1b1b" font-weight="bold" textLength="108.27" lengthAdjust="spacingAndGlyphs">5,514.14</text>
<text x="524.68" y="667.60" font-family="Liberation Mono" font-size="26.61" fill="#1b1b1b" font-weight="bold" textLength="82.19" lengthAdjust="spacingAndGlyphs">263.76</text>
<text x="665.47" y="599.10" font-family="Liberation Mono" font-size="26.61" fill="#1b1b1b" font-weight="bold" textLength="108.50" lengthAdjust="spacingAndGlyphs">6,909.14</text>
<text x="692.21" y="667.60" font-family="Liberation Mono" font-size="26.61" fill="#1b1b1b" font-weight="bold" textLength="82.25" lengthAdjust="spacingAndGlyphs">171.03</text>
<text x="833.50" y="599.10" font-family="Liberation Mono" font-size="26.61" fill="#1b1b1b" font-weight="bold" textLength="108.91" lengthAdjust="spacingAndGlyphs">5,589.90</text>
<text x="860.02" y="667.60" font-family="Liberation Mono" font-size="26.61" fill="#1b1b1b" font-weight="bold" textLength="81.76" lengthAdjust="spacingAndGlyphs">138.84</text>
<text x="370.07" y="704.20" font-family="Liberation Mono" font-size="26.61" fill="#1b1b1b" textLength="68.64" lengthAdjust="spacingAndGlyphs">30.51</text>
<text x="537.87" y="704.20" font-family="Liberation Mono" font-size="26.61" fill="#1b1b1b" textLength="69.36" lengthAdjust="spacingAndGlyphs">25.02</text>
<text x="705.77" y="704.20" font-family="Liberation Mono" font-size="26.61" fill="#1b1b1b" textLength="68.69" lengthAdjust="spacingAndGlyphs">53.04</text>
<text x="873.85" y="704.20" font-family="Liberation Mono" font-size="26.61" fill="#1b1b1b" textLength="68.88" lengthAdjust="spacingAndGlyphs">42.22</text>
<text x="370.06" y="741.88" font-family="Liberation Mono" font-size="26.61" fill="#1b1b1b" textLength="68.95" lengthAdjust="spacingAndGlyphs">30.20</text>
<text x="537.89" y="741.88" font-family="Liberation Mono" font-size="26.61" fill="#1b1b1b" textLength="68.88" lengthAdjust="spacingAndGlyphs">22.74</text>
<text x="705.76" y="741.88" font-family="Liberation Mono" font-size="26.61" fill="#1b1b1b" textLength="69.00" lengthAdjust="spacingAndGlyphs">53.25</text>
<text x="873.85" y="741.88" font-family="Liberation Mono" font-size="26.61" fill="#1b1b1b" textLength="68.40" lengthAdjust="spacingAndGlyphs">45.24</text>
<text x="705.51" y="779.56" font-family="Liberation Mono" font-size="26.61" fill="#1b1b1b" textLength="68.96" lengthAdjust="spacingAndGlyphs">64.74</text>
<text x="873.56" y="779.56" font-family="Liberation Mono" font-size="26.61" fill="#1b1b1b" textLength="69.06" lengthAdjust="spacingAndGlyphs">51.38</text>
<text x="370.35" y="817.24" font-family="Liberation Mono" font-size="26.61" fill="#1b1b1b" textLength="68.76" lengthAdjust="spacingAndGlyphs">40.08</text>
<text x="538.06" y="817.24" font-family="Liberation Mono" font-size="26.61" fill="#1b1b1b" textLength="69.06" lengthAdjust="spacingAndGlyphs">34.18</text>
<text x="370.06" y="854.92" font-family="Liberation Mono" font-size="26.61" fill="#1b1b1b" textLength="69.17" lengthAdjust="spacingAndGlyphs">37.92</text>
<text x="538.06" y="854.92" font-family="Liberation Mono" font-size="26.61" fill="#1b1b1b" textLength="69.00" lengthAdjust="spacingAndGlyphs">32.03</text>
<text x="370.07" y="892.60" font-family="Liberation Mono" font-size="26.61" fill="#1b1b1b" textLength="68.64" lengthAdjust="spacingAndGlyphs">37.21</text>
<text x="538.06" y="892.60" font-family="Liberation Mono" font-size="26.61" fill="#1b1b1b" textLength="69.35" lengthAdjust="spacingAndGlyphs">31.17</text>
<text x="370.07" y="930.28" font-family="Liberation Mono" font-size="26.61" fill="#1b1b1b" textLength="68.69" lengthAdjust="spacingAndGlyphs">32.24</text>
<text x="537.88" y="930.28" font-family="Liberation Mono" font-size="26.61" fill="#1b1b1b" textLength="69.33" lengthAdjust="spacingAndGlyphs">28.59</text>
<rect x="0.00" y="949.00" width="2304.00" height="5.00" fill="#f3f3f3"/>
<line x1="2.00" y1="949.60" x2="2304.00" y2="949.60" stroke="#d9d9d9" stroke-width="1.50" stroke-linecap="butt"/>
<defs><filter id="ds" x="-50%" y="-50%" width="200%" height="200%"><feDropShadow dx="0.8" dy="1.8" stdDeviation="1.4" flood-color="#000" flood-opacity="0.22"/></filter></defs>
<rect x="2.80" y="897.20" width="22.80" height="32.20" fill="#f3f3f3" stroke="#e4e4e4" stroke-width="1.00" filter="url(#ds)"/>
<rect x="10.45" y="906.95" width="2.30" height="2.30" fill="#111111"/>
<rect x="15.85" y="906.95" width="2.30" height="2.30" fill="#111111"/>
<rect x="10.45" y="912.15" width="2.30" height="2.30" fill="#111111"/>
<rect x="15.85" y="912.15" width="2.30" height="2.30" fill="#111111"/>
<rect x="10.45" y="917.35" width="2.30" height="2.30" fill="#111111"/>
<rect x="15.85" y="917.35" width="2.30" height="2.30" fill="#111111"/>
</svg>
</body></html>
